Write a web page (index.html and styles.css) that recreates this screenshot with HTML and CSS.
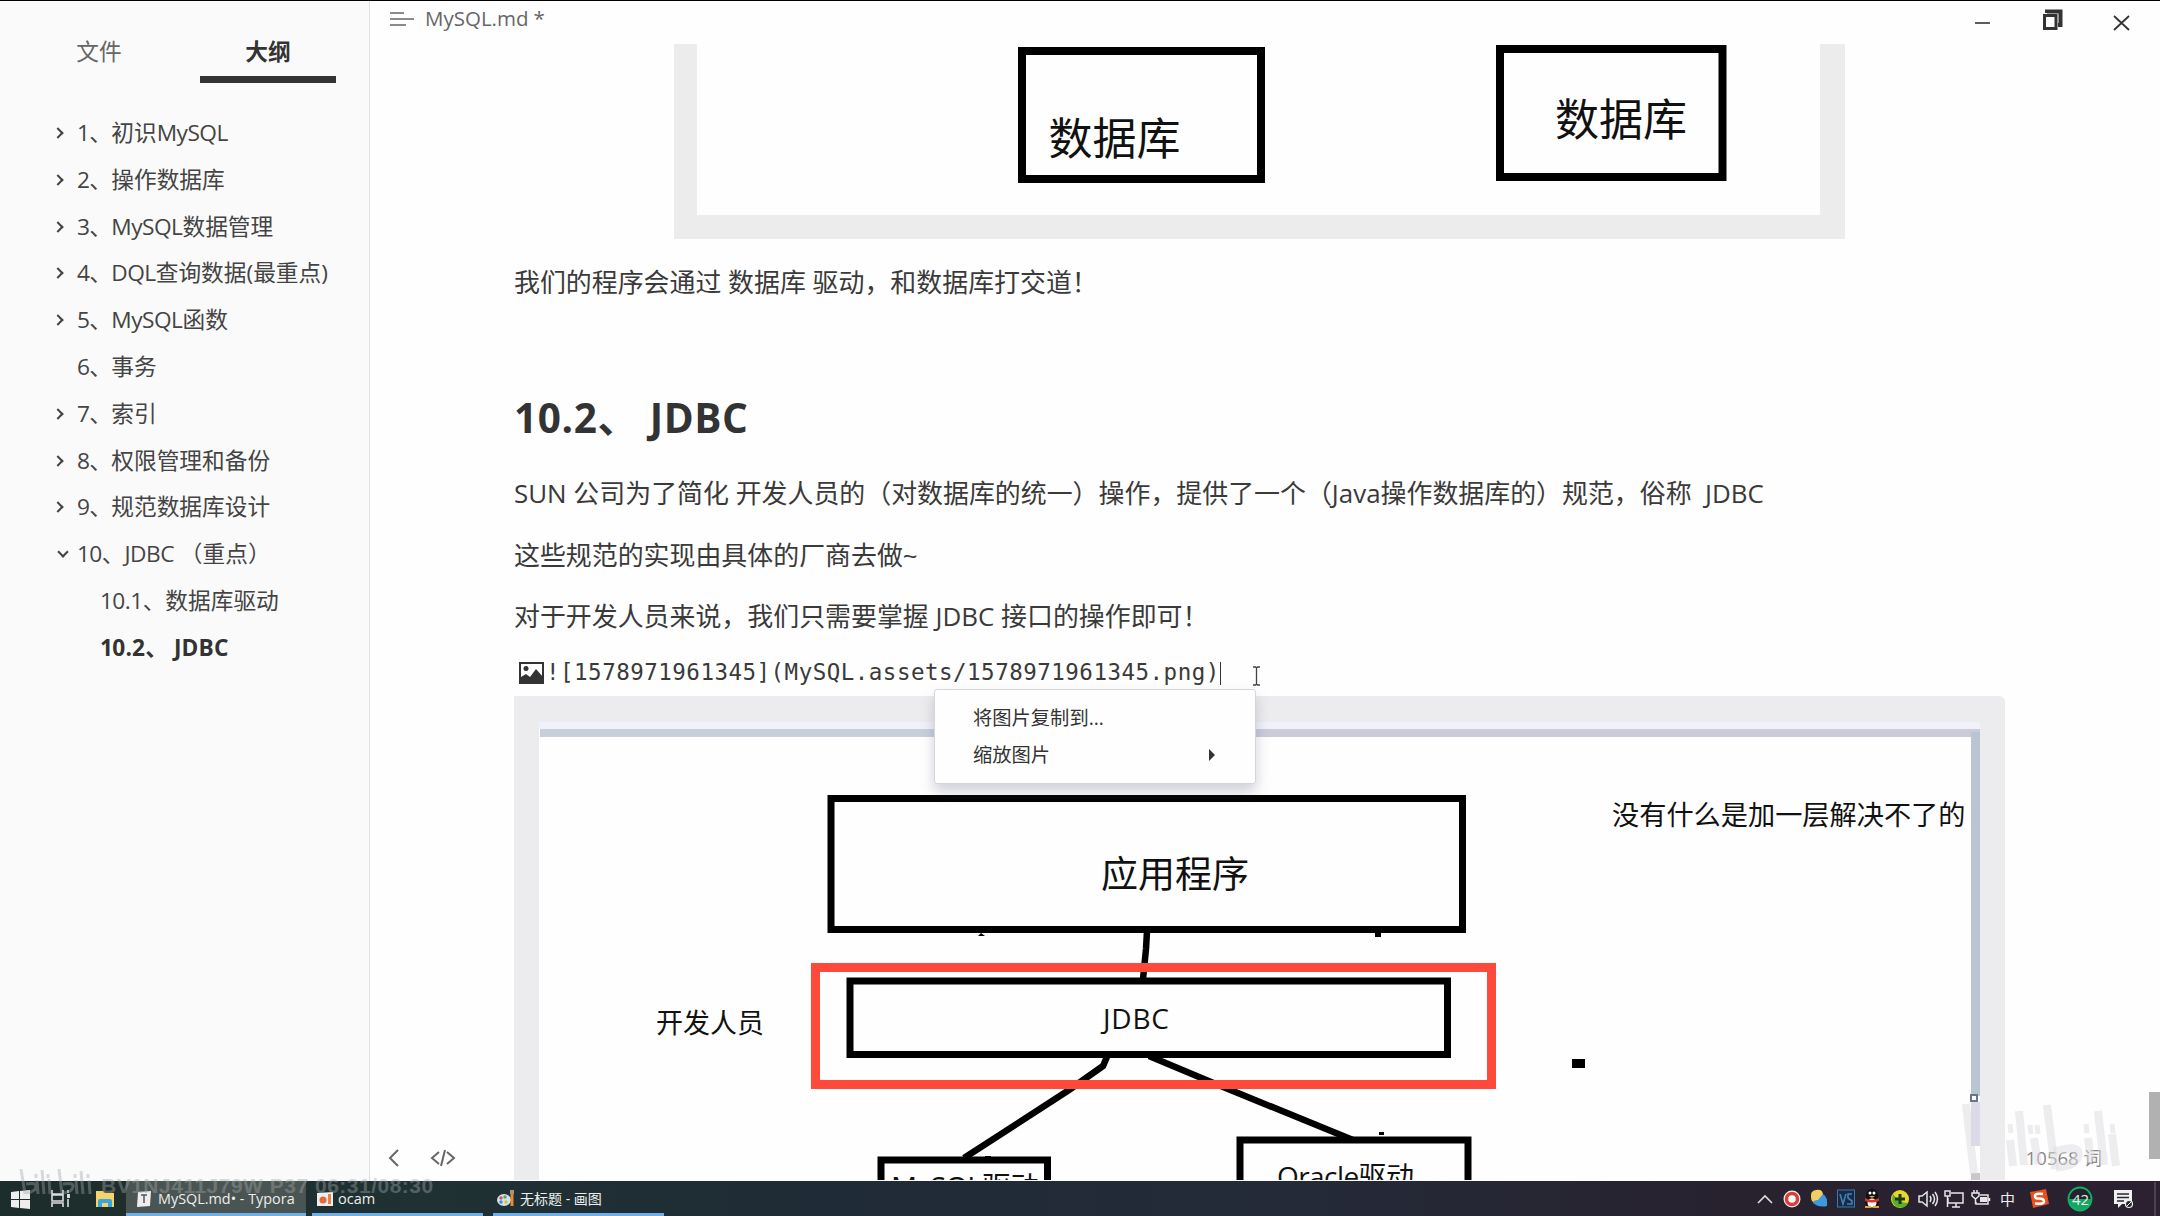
FILE: index.html
```
<!DOCTYPE html>
<html lang="zh-CN">
<head>
    <meta charset="UTF-8">
    <title>MySQL.md - Typora</title>
    <link rel="stylesheet" href="styles.css">
</head>
<body>
<div class="window">
    <div class="sidebar">
        <div class="tabs">
            <div class="tab">文件</div>
            <div class="tab active">大纲</div>
        </div>
        <ul class="outline">
            <li class="fold">1、初识<span>MySQL</span></li>
            <li class="fold">2、操作数据库</li>
            <li class="fold">3、<span>MySQL</span>数据管理</li>
            <li class="fold">4、<span>DQL</span>查询数据(最重点)</li>
            <li class="fold">5、<span>MySQL</span>函数</li>
            <li>6、事务</li>
            <li class="fold">7、索引</li>
            <li class="fold">8、权限管理和备份</li>
            <li class="fold">9、规范数据库设计</li>
            <li class="fold open"><span>10</span>、<span>JDBC</span> （重点）</li>
            <li class="sub"><span>10.1</span>、数据库驱动</li>
            <li class="sub current"><span>10.2</span>、 <span>JDBC</span></li>
        </ul>
    </div>

    <div class="main">
        <div class="titlebar">
            <svg class="menu-icon" width="26" height="16" viewBox="0 0 26 16"><path d="M1 2h14M1 8h24M1 14h16" stroke="#666" stroke-width="1.6"/></svg>
            <div class="title">MySQL.md<span>*</span></div>
            <svg class="controls" width="160" height="24" viewBox="0 0 160 24" fill="none" stroke="#333">
                <path d="M2 15h15" stroke-width="1.6"/>
                <path d="M74 5V3.500h13.500V17H85" stroke-width="4"/>
                <path d="M71.500 7.500h11.500v13h-11.500z" stroke-width="3"/>
                <path d="M141 8l15 14M156 8l-15 14" stroke-width="1.8"/>
            </svg>
        </div>

        <div class="content">
            <svg class="figure1" width="1171" height="195" viewBox="674 44 1171 195">
                <path d="M674 44h23v171h1123V44h25v195H674z" fill="#ececec"/>
                <g fill="none" stroke="#000" stroke-width="8">
                    <rect x="1022" y="51" width="239" height="128"/>
                    <rect x="1500" y="49" width="222.500" height="128"/>
                </g>
                <g class="draw" font-size="44">
                    <text x="1048.500" y="155">数据库</text>
                    <text x="1555" y="136">数据库</text>
                </g>
            </svg>

            <p class="p1">我们的程序会通过 数据库 驱动，和数据库打交道！</p>
            <h2>10.2、 JDBC</h2>
            <p class="p2">SUN 公司为了简化 开发人员的（对数据库的统一）操作，提供了一个（Java操作数据库的）规范，俗称&nbsp; JDBC</p>
            <p class="p3">这些规范的实现由具体的厂商去做~</p>
            <p class="p4">对于开发人员来说，我们只需要掌握 JDBC 接口的操作即可！</p>
            <div class="source">
                <svg width="25" height="22" viewBox="0 0 25 22"><rect x="1" y="1" width="23" height="20" fill="#fff" stroke="#333" stroke-width="2"/><circle cx="7" cy="6.500" r="2.500" fill="#333"/><path d="M2 21v-6l5-3 4 3 6-8 7 8v6z" fill="#333"/></svg>
                <code>![1578971961345](MySQL.assets/1578971961345.png)</code>
                <i class="caret"></i>
                <svg class="ibeam" width="9" height="20" viewBox="0 0 9 20"><path d="M1 1h2.500l1 1 1-1H8M4.500 2v16M1 19h2.500l1-1 1 1H8" fill="none" stroke="#444" stroke-width="1.300"/></svg>
            </div>

            <svg class="figure2" width="1492" height="484" viewBox="514 696 1492 484">
                <path d="M514 1180V696h1486q5 1 5 6v478z" fill="#ececee"/>
                <path d="M539 722h1441v458H539z" fill="#fefefe"/>
                <path d="M539 722h1441v7H539z" fill="#f0f1fa"/>
                <path d="M540 729h394v8H540z" fill="#c8cfd9"/>
                <path d="M934 729h1046v8H934z" fill="#cbcbd8"/>
                <path d="M1971 732h9v364h-9z" fill="#b9c5d2"/>
                <path d="M1971 1102h9v44h-9z" fill="#dcdae9"/>
                <path d="M1971 1173h9v7h-9z" fill="#c8c8cc"/>
                <rect x="1971" y="1095" width="6" height="6" fill="#fff" stroke="#67788a" stroke-width="2"/>
                <g fill="none" stroke="#000" stroke-width="7">
                    <rect x="831" y="798.500" width="631.500" height="131"/>
                    <rect x="850" y="981" width="597.500" height="73.500"/>
                    <rect x="881" y="1160" width="166.500" height="60"/>
                    <rect x="1240" y="1140" width="228" height="60"/>
                    <path d="M1147 931l-1 18-3 30M1109 1052l-6 14-34 24-105 68M1149 1056l62 26 142 58" stroke-width="6.500"/>
                </g>
                <rect x="815.500" y="967.500" width="676" height="117" fill="none" stroke="#fe4a3b" stroke-width="9"/>
                <path d="M978 936l3-3 4 3zM1375 932h6v5h-6zM1572 1059h13v9h-13zM1379 1132h5v3h-5zM985 1156h6v3h-6z"/>
                <g class="draw" font-size="27">
                    <text x="1101" y="888" font-size="37">应用程序</text>
                    <text x="1103" y="1029" font-size="28" textLength="66">JDBC</text>
                    <text x="656" y="1033">开发人员</text>
                    <text x="1612" y="825" font-size="27.200">没有什么是加一层解决不了的</text>
                    <text x="891" y="1198" font-size="29" textLength="148">MySQL驱动</text>
                    <text x="1277" y="1187" font-size="28" textLength="137">Oracle驱动</text>
                </g>
            </svg>
        </div>

        <div class="popup">
            <div class="item">将图片复制到...</div>
            <div class="item">缩放图片<i></i></div>
        </div>
        <svg class="footer-icons" width="72" height="22" viewBox="0 0 72 22" fill="none" stroke="#666" stroke-width="2">
            <path d="M12 3L4 11l8 8M53 5l-7 6 7 6M61 5l7 6-7 6M59 3l-4 16"/>
        </svg>
        <div class="words">10568 词</div>
        <div class="scroll"></div>
        <svg class="logo" width="170" height="84" viewBox="1955 1096 170 84" fill="none" stroke="#dcdce2" stroke-opacity=".5" stroke-width="8">
            <path d="M1966 1104l8 70M2019 1111l5 54M2047 1105l8 64M2098 1111l6 54M2010 1140l3 26M2034 1138l4 26M2088 1138l3 24M2112 1134l4 32"/>
            <path d="M2010 1124l1 9M2030 1125l1 9M2037 1125l1 9M2086 1124l1 9M2112 1124l1 9" stroke-width="5"/>
            <path d="M2054 1152q26-8 24 3t-22 12" stroke-width="9"/>
        </svg>
    </div>
</div>

<div class="taskbar">
    <svg class="launch" width="126" height="35" viewBox="0 1181 126 35">
        <path d="M11 1192l8-1v8h-8zM20 1191l10-1v9H20zM11 1200h8v8l-8-1zM20 1200h10v9l-10-1z" fill="#eee"/>
        <path d="M52 1190v4h11v-4M52 1207v-4h11v4M52 1195h11v6H52zM68 1190v3M68 1199v8" fill="none" stroke="#ddd" stroke-width="1.600"/>
        <path d="M67 1194h3v4h-3z" fill="#ddd"/>
        <path d="M96 1191h7l2 2h9v14H96z" fill="#f5d36b"/>
        <path d="M98 1207v-6q0-2 2-2h10q2 0 2 2v6h-4v-4h-6v4z" fill="#39a5dc"/>
    </svg>
    <div class="task focus">
        <svg width="16" height="16" viewBox="0 0 16 16"><path d="M2 1l13-1-1 15-13 1z" fill="#eee"/><path d="M5 4h6M8 4v8" stroke="#555" stroke-width="1.500"/></svg>
        MySQL.md• - Typora
    </div>
    <div class="task">
        <svg width="16" height="16" viewBox="0 0 16 16"><path d="M0 2l16-1v14H0z" fill="#eee"/><circle cx="6" cy="9" r="3.500" fill="#e4683a"/><path d="M11 3h3v10h-3z" fill="#e88050"/></svg>
        ocam
    </div>
    <div class="task paint">
        <svg width="18" height="18" viewBox="0 0 18 18"><ellipse cx="7" cy="11" rx="7" ry="6" fill="#cfe3ee"/><circle cx="4" cy="9" r="1.700" fill="#d9534b"/><circle cx="8" cy="8" r="1.700" fill="#55a848"/><circle cx="4" cy="13" r="1.700" fill="#398bd4"/><circle cx="9" cy="13" r="1.700" fill="#e9b62f"/><path d="M15 5v12" stroke="#e28a35" stroke-width="3"/><path d="M13 1h4v4h-4z" fill="#b78b7b"/></svg>
        无标题 - 画图
    </div>
    <svg class="tray" width="420" height="35" viewBox="1740 1181 420 35">
        <path d="M1758 1203l7-7 7 7" fill="none" stroke="#ddd" stroke-width="1.600"/>
        <circle cx="1792" cy="1199" r="8.500" fill="#f2eeee"/><circle cx="1792" cy="1199" r="5.500" fill="#fff" stroke="#d94039" stroke-width="3.500"/>
        <path d="M1811 1197q-1-6 5-7 7-1 7 5l-6 8q-6 0-6-6z" fill="#f1cf62"/><path d="M1813 1203q0-3 5-3l5-6q5 3 4 12-8 2-14-3z" fill="#3d9ae0"/>
        <rect x="1837.500" y="1190" width="17" height="17" fill="#182a44" stroke="#347bb5"/>
        <path d="M1840 1194l3 10 3-10M1852 1194h-4v4l4 3v3h-5" fill="none" stroke="#4382b5" stroke-width="1.600"/>
        <ellipse cx="1872" cy="1196" rx="6" ry="7" fill="#111"/><ellipse cx="1872" cy="1202" rx="7" ry="6" fill="#111"/><ellipse cx="1872" cy="1203" rx="4.500" ry="4.500" fill="#f7f7f7"/><path d="M1865 1198q7 4 14 0v3q-7 3-14 0z" fill="#d9342c"/><circle cx="1870" cy="1193" r="1.500" fill="#fff"/><circle cx="1874" cy="1193" r="1.500" fill="#fff"/><path d="M1869 1196h6l-3 2zM1865 1206h6v2h-6zM1873 1206h6v2h-6z" fill="#e9a32c"/>
        <circle cx="1900" cy="1199" r="9" fill="#e9d82a"/><path d="M1893 1194q-3 9 4 13 8 2 11-4-9 0-15-9z" fill="#57ad2f"/><path d="M1900 1194v10M1895 1199h10" stroke="#1c3b12" stroke-width="3"/>
        <g fill="none" stroke="#e6e6ea" stroke-width="1.500">
            <path d="M1919 1196h3l5-4v14l-5-4h-3zM1930 1196q2 3 0 6M1932.500 1194q4 5 0 10M1935 1192q5 7 0 14"/>
            <path d="M1951 1193h12v10h-15v-5M1952 1207h8M1956 1203v4M1945 1191h5v5h-5zM1947.500 1196v11"/>
            <path d="M1980 1195h8v9h-12v-2M1989.500 1198v3M1972 1193h7v3l-3.500 3-3.500-3zM1974 1190v3M1977 1190v3M1975.500 1199v5"/>
        </g>
        <path d="M1980 1197h7v5h-7z" fill="#e6e6ea"/>
        <text class="tray-text" x="2000" y="1205" font-size="15">中</text>
        <path d="M2030 1192l16-3 3 15-16 4z" fill="#e9501e"/>
        <path d="M2043 1194q-8-1-8 2t4 2.500q5 0 5 3t-9 2" fill="none" stroke="#fff" stroke-width="2.600"/>
        <circle cx="2080" cy="1199" r="12" fill="#22232d"/><path d="M2069 1199h22q0 11-11 11t-11-11z" fill="#13a85f"/><circle cx="2080" cy="1199" r="11.500" fill="none" stroke="#13b166" stroke-width="1.800"/>
        <text class="tray-text" x="2072" y="1205" font-size="15">42</text>
        <path d="M2114 1190h18v14h-10l-4 4v-4h-4z" fill="#f0f0f2"/><path d="M2117 1194h12M2117 1197.500h12M2117 1201h7" stroke="#29242f" stroke-width="1.300"/><circle cx="2129" cy="1204" r="3.500" fill="#29242f" stroke="#f0f0f2" stroke-width="1.200"/><path d="M2127 1206l4-4" stroke="#f0f0f2"/>
        <path d="M2155 1182v34" stroke="#6b6671"/>
    </svg>
</div>

<div class="watermark">
    <svg width="74" height="32" viewBox="0 0 74 32" fill="none" stroke="#a3a9a9" stroke-width="3">
        <path d="M3 2l4 25M24 3l2 24M31 12l1 15M41 2l3 25M63 4l2 23M71 13l1 14M19 13l1 14M58 13l1 14M8 17q11-2 10 3t-10 6M45 17q11-2 10 3t-10 6M18 7v4M30 7v4M57 7v4M70 7v4"/>
    </svg>
    <span>BV1NJ411J79W P37 06:31/08:30</span>
</div>
</body>
</html>
```
FILE: styles.css
```
body {
    margin: 0;
    width: 2160px;
    height: 1216px;
    overflow: hidden;
    position: relative;
    font-family: "Open Sans", "Noto Sans CJK SC", sans-serif;
    color: #3a3a3a;
    background-color: #fefefe;
}
.window {
    display: flex;
    height: 1181px;
    box-sizing: border-box;
    border-top: 1px solid #000;
}
/*侧边栏*/
.sidebar {
    width: 369px;
    flex-shrink: 0;
    background-color: #fafafa;
    border-right: 1px solid #e0e1e8;
}
.tabs {
    display: flex;
    justify-content: space-between;
    padding: 26px 33px 0 31px;
    font-size: 22.7px;
}
.tab {
    width: 136px;
    height: 49px;
    line-height: 50px;
    text-align: center;
    color: #666;
}
.tab.active {
    font-weight: bold;
    color: #333;
    border-bottom: 7px solid #333;
}
.outline {
    list-style: none;
    margin: 27px 0 0;
    padding: 0 0 0 57px;
    font-size: 22.7px;
    line-height: 46.8px;
    color: #444;
}
.outline li {
    height: 46.8px;
    padding-left: 20px;
    white-space: pre;
    position: relative;
}
.outline li::first-letter {
    letter-spacing: -0.7px;
}
.outline span {
    letter-spacing: -0.5px;
}
.outline .sub {
    padding-left: 43px;
}
.outline .current {
    font-weight: bold;
    color: #333;
}
.outline .current span {
    letter-spacing: 0.2px;
}
.fold::before {
    content: "";
    position: absolute;
    left: -3px;
    top: 19px;
    width: 6px;
    height: 6px;
    border: solid #444;
    border-width: 2px 2px 0 0;
    transform: rotate(45deg);
}
.fold.open::before {
    left: 2px;
    top: 17px;
    transform: rotate(135deg);
}
/*编辑区*/
.main {
    flex: 1;
    position: relative;
    overflow: hidden;
}
.titlebar {
    display: flex;
    height: 43px;
    padding: 0 27px 0 19px;
}
.menu-icon {
    margin-top: 10px;
}
.title {
    flex: 1;
    margin-left: 10px;
    font-size: 20.5px;
    line-height: 34px;
    color: #666;
}
.title span {
    margin-left: 5px;
}
.controls {
    margin-top: 7px;
}
.content {
    padding-left: 144px;
}
.content svg {
    display: block;
}
.content .figure1 {
    margin-left: 160px;
}
.draw {
    font-family: "Open Sans", "Noto Sans CJK SC", sans-serif;
    fill: #111;
}
p, h2 {
    margin: 0;
    white-space: nowrap;
}
p {
    height: 44px;
    font-size: 25.93px;
    line-height: 44px;
}
h2 {
    height: 56px;
    margin-top: 86px;
    font-size: 40.5px;
    line-height: 56px;
    letter-spacing: 0.6px;
    color: #333;
}
.p1 {
    margin-top: 21px;
}
.p2 {
    margin-top: 25px;
}
.p3 {
    margin-top: 18px;
}
.p4 {
    margin-top: 17px;
}
.source {
    display: flex;
    align-items: center;
    height: 36px;
    margin-top: 17px;
    padding-left: 5px;
}
.source svg {
    flex-shrink: 0;
}
.source code {
    margin: -2px 0 0 2px;
    font-family: "DejaVu Sans Mono", monospace;
    font-size: 22.5px;
    letter-spacing: 0.49px;
}
.caret {
    width: 1px;
    height: 23px;
    background-color: #333;
}
.ibeam {
    margin: 6px 0 0 31px;
}
.figure2 {
    margin-top: 5px;
}
/*右键菜单*/
.popup {
    position: absolute;
    left: 564px;
    top: 688px;
    width: 322px;
    height: 95px;
    padding-top: 8px;
    box-sizing: border-box;
    background-color: #fefefe;
    border: 1px solid #d6d6da;
    border-radius: 3px;
    box-shadow: 0 8px 14px rgba(70, 75, 110, 0.25);
}
.item {
    display: flex;
    justify-content: space-between;
    align-items: center;
    height: 37.5px;
    padding: 0 40px 0 38px;
    font-size: 19.3px;
    color: #333;
}
.item i {
    margin-top: 2px;
    border: 6px solid transparent;
    border-left-color: #333;
    border-right: 0;
}
.footer-icons {
    position: absolute;
    left: 16px;
    top: 1146px;
}
.words {
    position: absolute;
    right: 58px;
    top: 1143px;
    font-size: 18.5px;
    line-height: 28px;
    color: #888;
}
.scroll {
    position: absolute;
    right: 0;
    top: 1091px;
    width: 11px;
    height: 67px;
    background-color: #b1b1b1;
}
.logo {
    position: absolute;
    left: 1585px;
    top: 1095px;
}
/*任务栏*/
.taskbar {
    display: flex;
    height: 35px;
    background: linear-gradient(to right, #1d2d2b, #1f3133 20%, #1f2b36 38%, #242a38 60%, #28222f 80%, #2b2130);
    color: #eee;
}
.launch {
    flex-shrink: 0;
}
.task {
    display: flex;
    align-items: center;
    width: 171px;
    height: 35px;
    padding: 3px 0 0 5px;
    margin-right: 10px;
    gap: 5px;
    box-sizing: border-box;
    border-bottom: 3px solid #70aee6;
    font-size: 14.5px;
    white-space: nowrap;
}
.task svg {
    flex-shrink: 0;
}
.task.focus {
    width: 180px;
    margin-right: 6px;
    padding-left: 10px;
    gap: 6px;
    background-color: #4a5553;
    font-size: 14.4px;
}
.task.paint {
    padding-left: 4px;
    padding-top: 2px;
    gap: 5px;
    font-size: 14px;
}
.tray {
    margin-left: auto;
}
.tray-text {
    fill: #eee;
}
/*水印*/
.watermark {
    position: absolute;
    left: 18px;
    top: 1167px;
    display: flex;
    opacity: 0.4;
}
.watermark span {
    margin: 7px 0 0 9px;
    font: bold 21px/24px "Liberation Sans", sans-serif;
    letter-spacing: 0.5px;
    color: #a3a9a9;
}
```
